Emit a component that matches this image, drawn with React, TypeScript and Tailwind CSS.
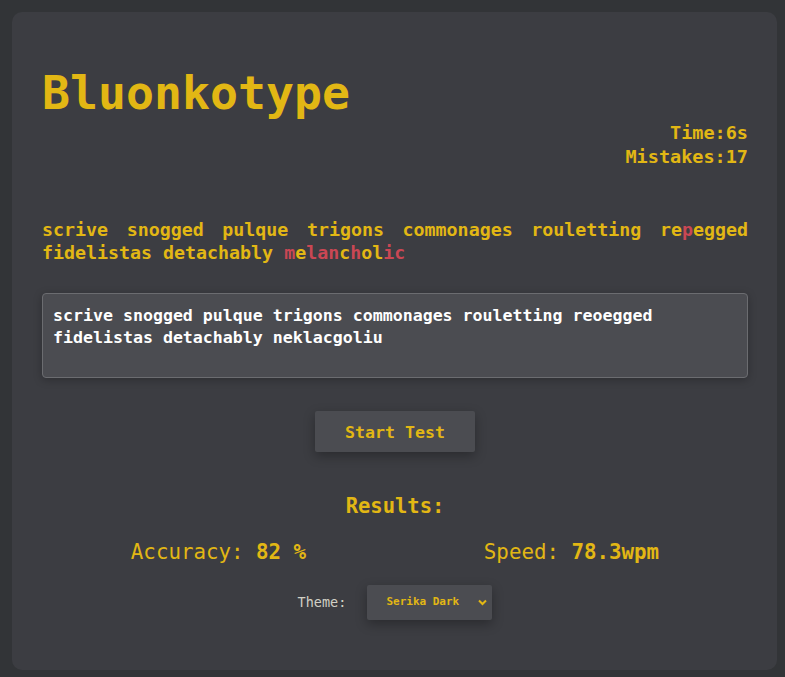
import { useState } from "react";

const mono = "font-['DejaVu_Sans_Mono',monospace]";

const last: [string, boolean][] = [
  ["m", true],
  ["e", false],
  ["l", true],
  ["a", true],
  ["n", true],
  ["c", false],
  ["h", true],
  ["o", false],
  ["l", false],
  ["i", true],
  ["c", true],
];

export default function App() {
  const [typed, setTyped] = useState(
    "scrive snogged pulque trigons commonages rouletting reoegged fidelistas detachably neklacgoliu"
  );
  const [theme, setTheme] = useState("serika");

  return (
    <div className={`min-h-screen bg-[#323437] pt-[12px] pl-[12px] pr-[8px] pb-[8px] ${mono}`}>
      <div className="flex min-h-[657px] flex-col rounded-[10px] bg-[#3c3d42] px-[30px] pr-[29px] pt-[58px] pb-[50px]">
        <h1 className="text-[46.5px] leading-[47px] font-bold text-[#e2b714]">Bluonkotype</h1>

        <div className="mt-[4px] text-right text-[18.5px] leading-[24px] font-bold text-[#e2b714]">
          <div>Time:6s</div>
          <div>Mistakes:17</div>
        </div>

        <p className="mt-[49px] text-justify text-[18.3px] leading-[23px] font-bold text-[#e2b714]">
          scrive snogged pulque trigons commonages rouletting re
          <span className="text-[#ca4754]">p</span>egged fidelistas detachably{" "}
          {last.map(([ch, bad], i) => (
            <span key={i} className={bad ? "text-[#ca4754]" : ""}>
              {ch}
            </span>
          ))}
        </p>

        <textarea
          value={typed}
          onChange={(e) => setTyped(e.target.value)}
          spellCheck={false}
          className={`mt-[29px] h-[85px] w-full resize-none rounded-[4px] border border-[#6b6c70] bg-[#4b4c51] px-[10px] py-[11px] text-[16.6px] leading-[22px] font-bold text-white shadow-[0_2px_8px_rgba(0,0,0,0.25)] outline-none ${mono}`}
        />

        <div className="mt-[33px] flex justify-center">
          <button
            className={`h-[41px] w-[160px] rounded-[2px] bg-[#4b4c51] pt-[3px] text-[16.6px] font-bold text-[#e2b714] shadow-[0_4px_12px_rgba(0,0,0,0.3)] ${mono}`}
          >
            Start Test
          </button>
        </div>

        <h2 className="mt-[40px] text-center text-[20.5px] leading-[28px] font-bold text-[#e2b714]">
          Results:
        </h2>

        <div className="mt-[18px] flex justify-around text-[20.8px] leading-[28px] text-[#e2b714]">
          <div>
            Accuracy: <span className="font-bold">82 %</span>
          </div>
          <div>
            Speed: <span className="font-bold">78.3wpm</span>
          </div>
        </div>

        <div className="mt-[19px] flex items-center justify-center gap-[21px]">
          <span className="text-[13.5px] text-[#d1d0c5]">Theme:</span>
          <div className="relative">
            <select
              value={theme}
              onChange={(e) => setTheme(e.target.value)}
              className={`h-[35px] w-[125px] appearance-none rounded-[2px] bg-[#4b4c51] pl-[19px] text-[11px] font-bold text-[#e2b714] shadow-[0_4px_12px_rgba(0,0,0,0.3)] outline-none ${mono}`}
            >
              <option value="serika">Serika Dark</option>
              <option value="light">Light</option>
            </select>
            <svg
              className="pointer-events-none absolute right-[5px] top-[14px]"
              width="9"
              height="7"
              viewBox="0 0 9 7"
              fill="none"
            >
              <path d="M1 1.5l3.5 3.5L8 1.5" stroke="#e2b714" strokeWidth="2" />
            </svg>
          </div>
        </div>
      </div>
    </div>
  );
}
